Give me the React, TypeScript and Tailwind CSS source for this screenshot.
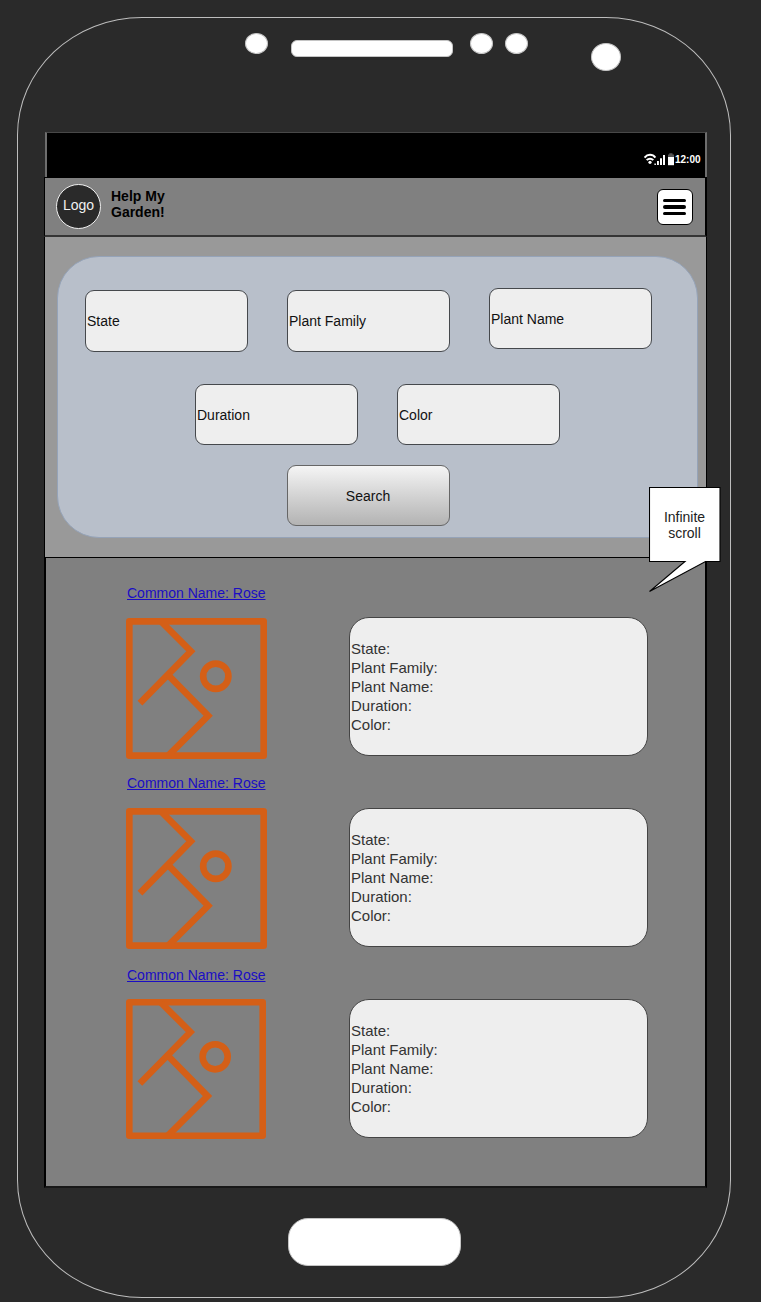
import React from "react";

const FIELD_LABELS = ["State:", "Plant Family:", "Plant Name:", "Duration:", "Color:"];

const PLANTS = [
  { name: "Common Name: Rose", row: "h-[190px]", body: "mt-[17px]", image: "w-[141px] h-[141px]", card: "ml-[82px] -mt-px" },
  { name: "Common Name: Rose", row: "h-[192px]", body: "mt-[17px]", image: "w-[141px] h-[141px]", card: "ml-[82px]" },
  { name: "Common Name: Rose", row: "h-[190px]", body: "mt-[16px]", image: "w-[140px] h-[140px]", card: "ml-[83px]" },
];

function StatusIcons() {
  return (
    <svg className="h-[13px] w-[31px]" viewBox="0 0 31 13">
      <g fill="none" stroke="#fff" strokeWidth="2">
        <path d="M0.6 4.6C3.5 0.9 8.5 0.9 11.4 4.6" />
        <path d="M2.7 7.2C4.6 5.1 7.4 5.1 9.3 7.2" />
      </g>
      <circle cx="6" cy="9.3" r="1.6" fill="#fff" />
      <path d="M10.4 10.4h1.5v1.6h-1.5zM13 8h1.9v4H13zM16 5.2h2V12h-2zM19 2h2v10h-2z" fill="#fff" />
      <path d="M25.3 0.3h3.2v1.2h1.5V4h-6V1.5h1.3z" fill="#555" />
      <path d="M24 4h6v8.2h-6z" fill="#fff" />
    </svg>
  );
}

function Field({ label, className = "h-[61px]" }: { label: string; className?: string }) {
  return (
    <div
      className={`flex w-[163px] shrink-0 items-center rounded-[9px] border border-[#45484c] bg-[#eeeeee] pl-px text-[14px] leading-4 text-[#111] ${className}`}
    >
      {label}
    </div>
  );
}

function PlantImage({ className }: { className: string }) {
  return (
    <svg className={`shrink-0 ${className}`} viewBox="0 0 424 424" fill="none" stroke="#d45f17" strokeWidth="20">
      <rect x="10" y="10" width="404" height="404" strokeLinejoin="round" />
      <path d="M107 12L195 100L42 256" />
      <path d="M127 172L247 294L127 414" />
      <circle cx="270" cy="175" r="38" />
    </svg>
  );
}

export default function App() {
  return (
    <div className="relative flow-root h-[1302px] w-[761px] overflow-hidden bg-[#2a2a2a] font-['Liberation_Sans',Arial,sans-serif]">
      <div className="ml-[17px] mt-[17px] h-[1281px] w-[714px] rounded-[125px/118px] border border-[#bdbdbd]">
        <div className="flex h-[114px] items-start">
          <div className="ml-[227px] mt-[15px] h-[21px] w-[23px] rounded-[50%] border border-[#c4c4c4] bg-white" />
          <div className="ml-[23px] mt-[22px] h-[17px] w-[162px] rounded-[6px] border border-[#c4c4c4] bg-white" />
          <div className="ml-[17px] mt-[15px] h-[21px] w-[23px] rounded-[50%] border border-[#c4c4c4] bg-white" />
          <div className="ml-[12px] mt-[15px] h-[21px] w-[23px] rounded-[50%] border border-[#c4c4c4] bg-white" />
          <div className="ml-[63px] mt-[25px] h-[28px] w-[30px] rounded-[50%] border border-[#c4c4c4] bg-white" />
        </div>

        <div className="ml-[26px] w-[663px]">
          <div className="ml-px flex h-[45px] items-start border-x-2 border-t border-x-[#6e6e6e] border-t-[#484848] bg-black text-white">
            <div className="ml-[597px] mt-[20px] flex items-center">
              <StatusIcons />
              <span className="text-[10px] font-bold leading-[13px]">12:00</span>
            </div>
          </div>

          <header className="flex h-[60px] items-start border-b-2 border-l border-r-2 border-t border-black border-b-[#353535] bg-[#808080]">
            <div className="ml-[11px] mt-[6px] flex h-[45px] w-[45px] items-center justify-center rounded-full border border-[#f0f0f0] bg-[#2a2a2a] pb-[3px] text-[14px] leading-4 text-[#f0f0f0]">
              Logo
            </div>
            <h1 className="ml-[10px] mt-[10px] w-[70px] text-[14px] font-bold leading-4 text-black">
              Help My Garden!
            </h1>
            <button className="ml-auto mr-[12px] mt-[11px] flex h-[36px] w-[36px] flex-col items-start justify-center gap-[3px] rounded-[6px] border border-black bg-white pl-[5px]">
              <span className="h-[3.5px] w-[23px] rounded-full bg-black" />
              <span className="h-[3.5px] w-[23px] rounded-full bg-black" />
              <span className="h-[3.5px] w-[23px] rounded-full bg-black" />
            </button>
          </header>

          <section className="h-[320px] border-x border-black bg-[#999999] pl-[12px] pt-[19px]">
            <div className="h-[282px] w-[641px] rounded-[42px] border border-[#95a3b8] bg-[#b8bfca] pt-[33px]">
              <div className="flex items-start gap-[39px] pl-[27px]">
                <Field label="State" className="h-[62px]" />
                <Field label="Plant Family" className="h-[62px]" />
                <Field label="Plant Name" className="-mt-[2px] h-[61px]" />
              </div>
              <div className="mt-[32px] flex gap-[39px] pl-[137px]">
                <Field label="Duration" />
                <Field label="Color" />
              </div>
              <button className="ml-[229px] mt-[20px] flex h-[61px] w-[163px] items-center justify-center rounded-[9px] border border-[#666] bg-linear-to-b from-[#f5f5f5] to-[#b3b3b3] pr-px text-[14px] leading-4 text-[#111]">
                Search
              </button>
            </div>
          </section>

          <section className="h-[631px] border-x-2 border-b-2 border-t border-black border-b-[#181818] bg-[#808080] pt-[27px]">
            {PLANTS.map((plant, i) => (
              <article key={i} className={plant.row}>
                <a href="#" className="ml-[81px] block h-[16px] w-fit text-[14px] leading-4 text-[#1a0dc4] underline">
                  {plant.name}
                </a>
                <div className={`flex items-start pl-[80px] ${plant.body}`}>
                  <PlantImage className={plant.image} />
                  <ul
                    className={`flex h-[139px] w-[299px] flex-col justify-center rounded-[20px] border border-[#444] bg-[#eeeeee] pl-px text-[15px] leading-[19px] text-[#333] ${plant.card}`}
                  >
                    {FIELD_LABELS.map((label) => (
                      <li key={label}>{label}</li>
                    ))}
                  </ul>
                </div>
              </article>
            ))}
          </section>
        </div>

        <div className="ml-[270px] mt-[30px] h-[48px] w-[173px] rounded-[20px] border border-[#c4c4c4] bg-white" />
      </div>

      <div className="absolute left-[649px] top-[487px] h-[107px] w-[73px]">
        <svg className="absolute inset-0 h-full w-full" viewBox="0 0 73 107">
          <path d="M0.5 0.5H71V74.5H56.5L0.5 104.5L36 74.5H0.5Z" fill="#fff" stroke="#000" strokeWidth="1.1" />
        </svg>
        <p className="relative mt-[22px] w-[71px] text-center text-[14px] leading-4 text-[#222]">
          Infinite
          <br />
          scroll
        </p>
      </div>
    </div>
  );
}
